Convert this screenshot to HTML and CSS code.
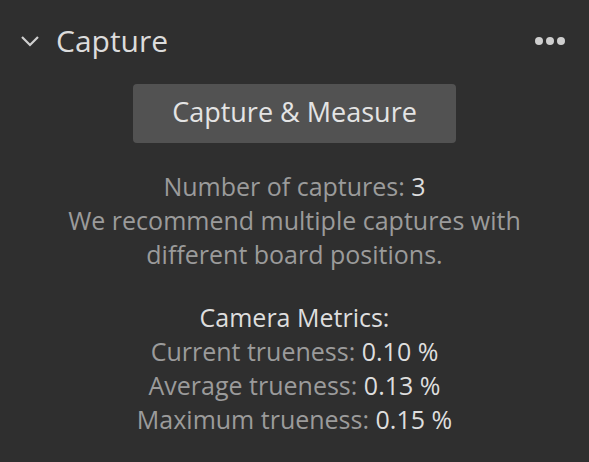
FILE: index.html
```html
<!DOCTYPE html>
<html lang="en">
<head>
    <meta charset="UTF-8">
    <title>Capture</title>
    <link rel="stylesheet" href="styles.css">
</head>
<body>
    <div class="panel">
        <div class="panel-header">
            <svg class="chevron" width="20" height="12" viewBox="0 0 20 12">
                <path d="M2 2 L10 10 L18 2" fill="none" stroke="#d0d0d0" stroke-width="2.2"/>
            </svg>
            <span class="panel-title">Capture</span>
            <span class="more">
                <i></i><i></i><i></i>
            </span>
        </div>

        <div class="panel-body">
            <button class="action">Capture &amp; Measure</button>

            <div class="info">
                <div>Number of captures: <span class="value">3</span></div>
                <div>We recommend multiple captures with</div>
                <div>different board positions.</div>
            </div>

            <div class="info metrics">
                <div class="value">Camera Metrics:</div>
                <div>Current trueness: <span class="value">0.10 %</span></div>
                <div>Average trueness: <span class="value">0.13 %</span></div>
                <div>Maximum trueness: <span class="value">0.15 %</span></div>
            </div>
        </div>
    </div>
</body>
</html>
```

FILE: styles.css
```css
body {
    margin: 0;
    padding: 0;
    background-color: #2f2f2f;
    font-family: "Open Sans", "Noto Sans", sans-serif;
}

.panel {
    width: 589px;
    height: 462px;
}

.panel-header {
    display: flex;
    align-items: center;
    height: 82px;
    padding: 0 24px 0 20px;
    box-sizing: border-box;
}

.chevron {
    margin-right: 16px;
}

.panel-title {
    color: #dcdcdc;
    font-size: 30px;
    flex: 1;
    padding-bottom: 2px;
}

.more {
    display: flex;
    gap: 3px;
}

.more i {
    width: 8px;
    height: 8px;
    border-radius: 50%;
    background-color: #cfcfcf;
}

.panel-body {
    display: flex;
    flex-direction: column;
    align-items: center;
}

.action {
    width: 323px;
    height: 59px;
    margin-top: 2px;
    padding: 0 0 5px;
    background-color: #525252;
    color: #e4e4e4;
    border: none;
    border-radius: 4px;
    font-family: inherit;
    font-size: 27px;
    cursor: pointer;
}

.info {
    margin-top: 26px;
    text-align: center;
    color: #9b9b9b;
    font-size: 25px;
    line-height: 34px;
}

.info.metrics {
    margin-top: 29px;
}

.value {
    color: #dedede;
}
```
